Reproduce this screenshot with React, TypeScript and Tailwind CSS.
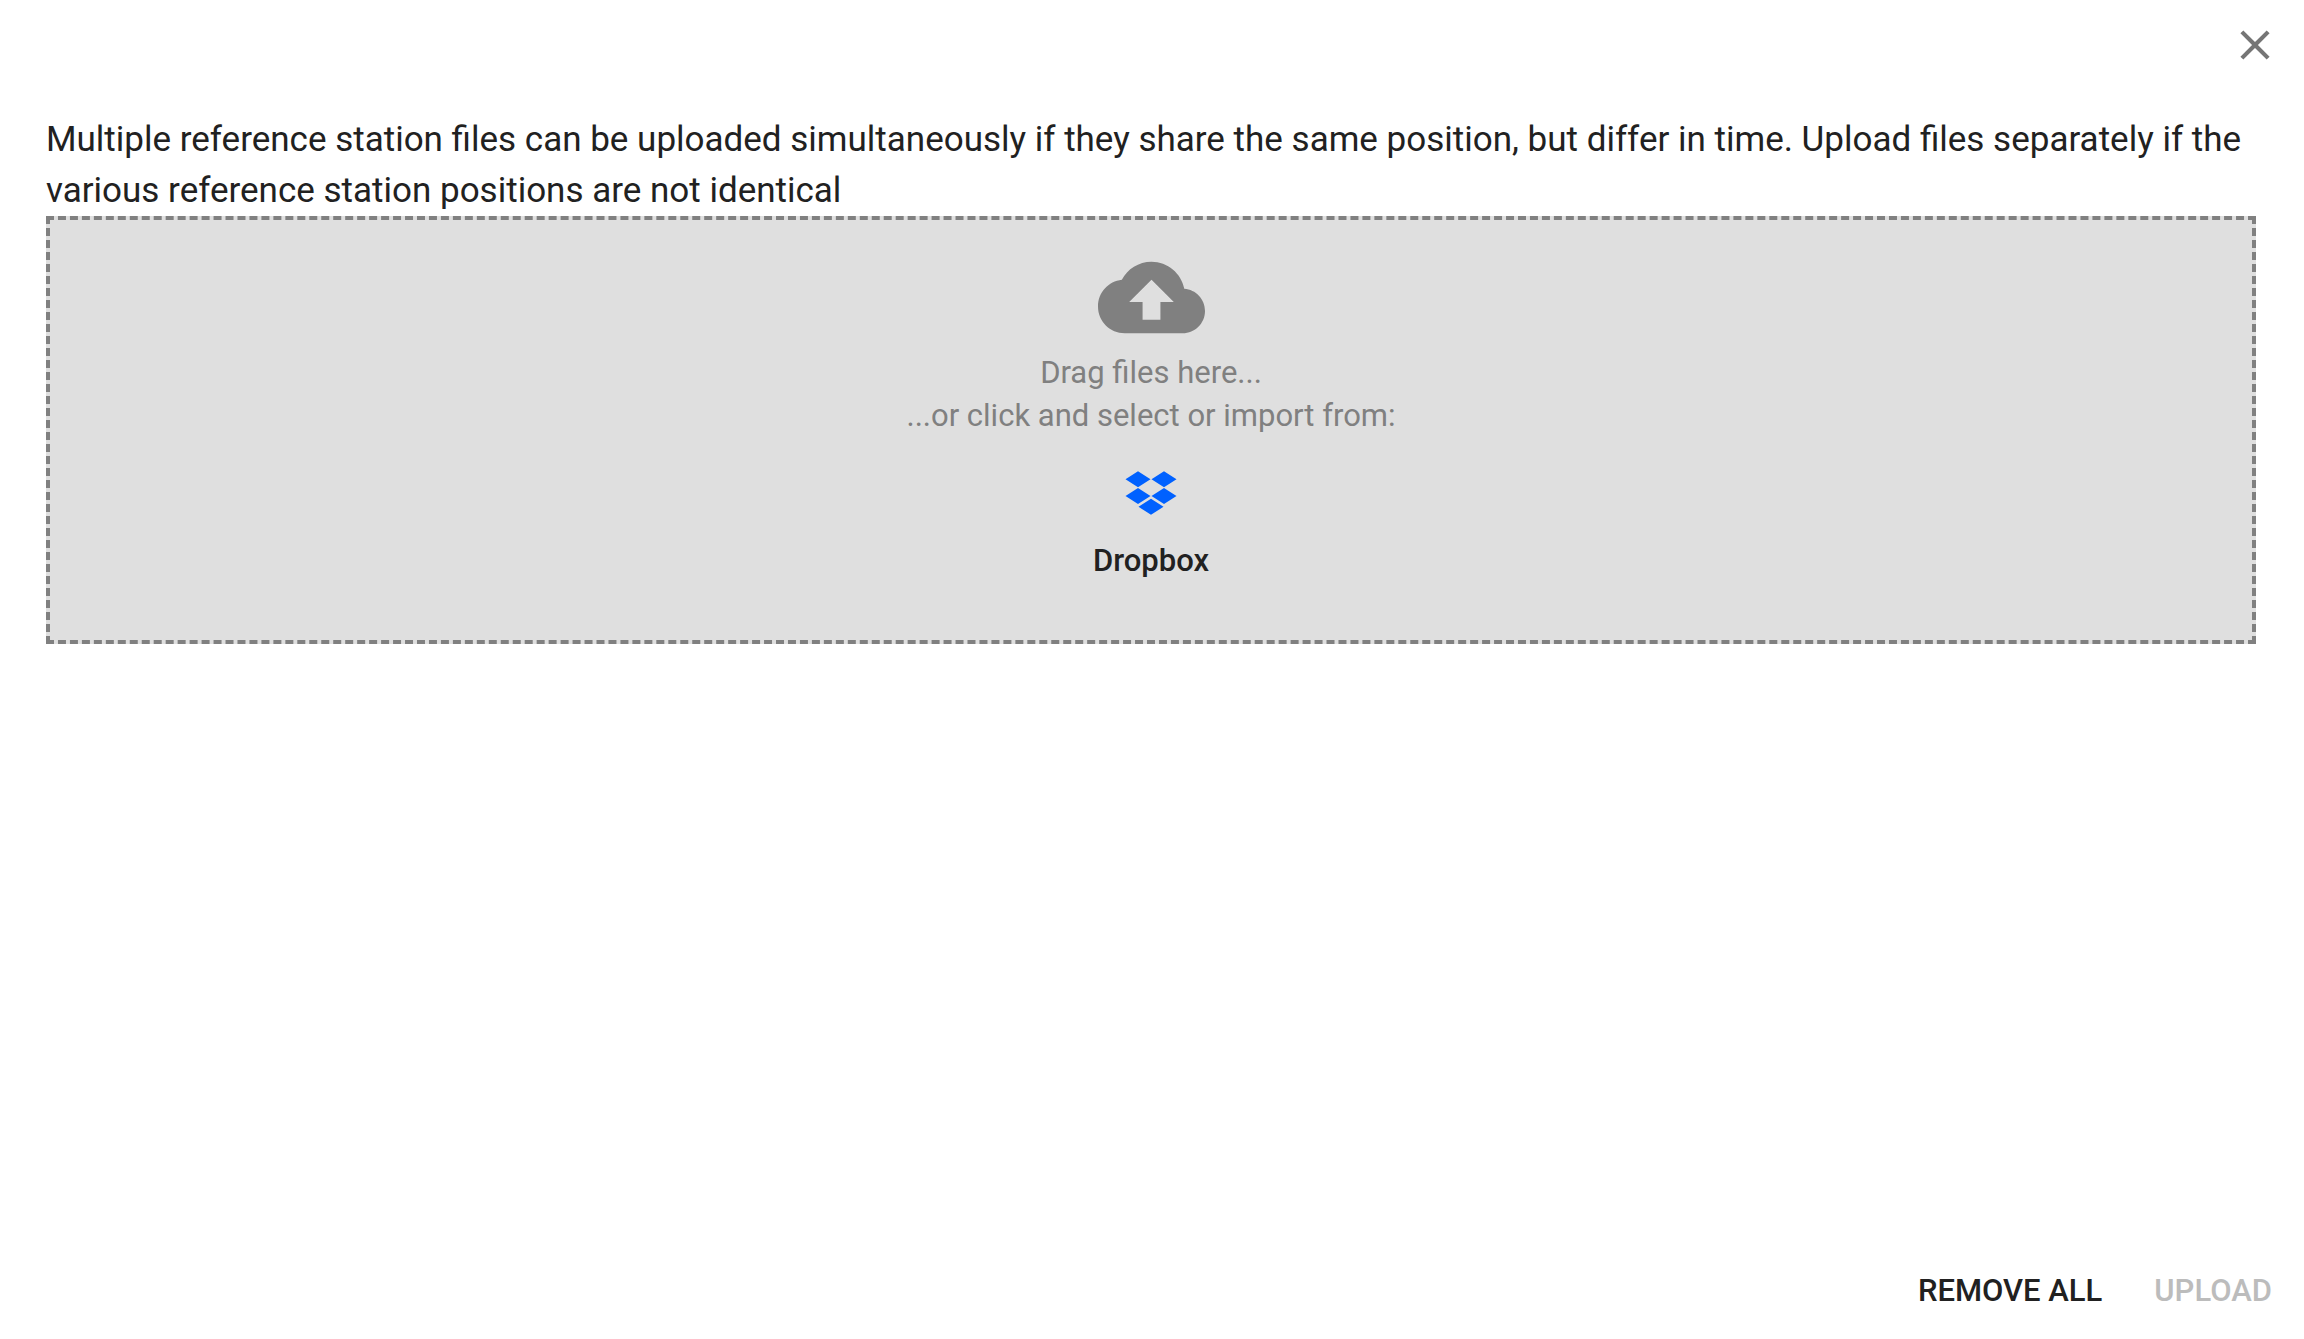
export default function App() {
  return (
    <div role="dialog" aria-label="Upload reference station files" className="flex min-h-screen flex-col bg-white font-['Roboto',sans-serif] text-[#212121]">
      <header className="flex justify-end px-6 pt-5">
        <button type="button" aria-label="Close" className="text-[#757575]">
          <svg viewBox="0 0 24 24" className="size-[50px]" fill="currentColor">
            <path d="M19 6.41L17.59 5 12 10.59 6.41 5 5 6.41 10.59 12 5 17.59 6.41 19 12 13.41 17.59 19 19 17.59 13.41 12 19 6.41z" />
          </svg>
        </button>
      </header>
      <main className="flex-1 pt-11 pr-12 pl-[46px]">
        <p className="text-[35px] leading-[51px]">
          Multiple reference station files can be uploaded simultaneously if they share the same position, but differ in time. Upload files separately if the various reference station positions are not identical
        </p>
        <section className="flex flex-col items-center border-4 border-dashed border-[#808080] bg-[#dfdfdf] pt-6 pb-[58px] text-[#808080]">
          <svg viewBox="0 0 24 24" className="size-[107px]" fill="currentColor" aria-hidden="true">
            <path d="M19.35 10.04C18.67 6.59 15.64 4 12 4 9.11 4 6.6 5.64 5.35 8.04 2.34 8.36 0 10.91 0 14c0 3.31 2.69 6 6 6h13c2.76 0 5-2.24 5-5 0-2.64-2.05-4.78-4.65-4.96zM14 13v4h-4v-4H7l5-5 5 5h-3z" />
          </svg>
          <p className="text-center text-[31px] leading-[43px]">
            Drag files here...
            <br />
            ...or click and select or import from:
          </p>
          <button type="button" className="mt-[34px] flex flex-col items-center gap-6 text-[31px] leading-[43px] font-medium text-[#212121]">
            <svg viewBox="0 0 52 44" className="h-11 w-[52px]" fill="#0061ff" aria-hidden="true">
              <path d="M13 0.3L25.5 8.3 13 16.3 0.5 8.3zM39 0.3L51.5 8.3 39 16.3 26.5 8.3zM0.5 24.9L13 16.9 25.5 24.9 13 32.9zM39 16.9L51.5 24.9 39 32.9 26.5 24.9zM13.5 35.8L26 27.8 38.5 35.8 26 43.8z" />
            </svg>
            Dropbox
          </button>
        </section>
      </main>
      <footer className="flex justify-end gap-[52px] px-8 pb-6 text-[31px] leading-[48px] font-medium">
        <button type="button">REMOVE ALL</button>
        <button type="button" disabled className="text-[#bcbcbc]">UPLOAD</button>
      </footer>
    </div>
  );
}
